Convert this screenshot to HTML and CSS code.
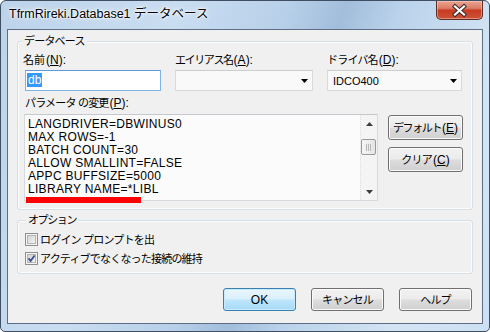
FILE: index.html
```html
<!DOCTYPE html>
<html lang="ja">
<head>
<meta charset="utf-8">
<title>TfrmRireki.Database1 データベース</title>
<link rel="stylesheet" href="styles.css">
</head>
<body>
<div class="window">
  <div class="titlebar">
    <span class="title">TfrmRireki.Database1 データベース</span>
    <div class="close">
      <svg width="45" height="17" viewBox="0 0 45 17">
        <path d="M18 4.5 L27 12.5 M27 4.5 L18 12.5" stroke="#3b2a28" stroke-width="4.2" stroke-linecap="square" fill="none"/>
        <path d="M18 4.5 L27 12.5 M27 4.5 L18 12.5" stroke="#ffffff" stroke-width="2.2" stroke-linecap="square" fill="none"/>
      </svg>
    </div>
  </div>
  <div class="client">
    <div class="group g1">
      <span class="legend jp">データベース</span>
      <div class="fields">
        <div class="field">
          <span class="label name-label"><span class="jp loose">名前</span><span class="key">(<u>N</u>):</span></span>
          <div class="edit focused"><span class="sel">db</span></div>
        </div>
        <div class="field">
          <span class="label"><span class="jp tight">エイリアス名</span><span class="key">(<u>A</u>):</span></span>
          <div class="combo">
            <span class="combo-text"></span>
            <svg class="arrow" width="7" height="4" viewBox="0 0 7 4"><polygon points="0,0 7,0 3.5,4" fill="#000"/></svg>
          </div>
        </div>
        <div class="field">
          <span class="label"><span class="jp">ドライバ名</span><span class="key">(<u>D</u>):</span></span>
          <div class="combo">
            <span class="combo-text">IDCO400</span>
            <svg class="arrow" width="7" height="4" viewBox="0 0 7 4"><polygon points="0,0 7,0 3.5,4" fill="#000"/></svg>
          </div>
        </div>
      </div>
      <span class="label plabel"><span class="jp">パラメータ の変更</span><span class="key">(<u>P</u>):</span></span>
      <div class="paramrow">
        <div class="memo">
          <div class="lines">
            <div>LANGDRIVER=DBWINUS0</div>
            <div>MAX ROWS=-1</div>
            <div>BATCH COUNT=30</div>
            <div>ALLOW SMALLINT=FALSE</div>
            <div>APPC BUFFSIZE=5000</div>
            <div>LIBRARY NAME=*LIBL</div>
          </div>
          <div class="vscroll">
            <div class="sbtn"><svg width="7" height="4" viewBox="0 0 7 4"><polygon points="3.5,0 7,4 0,4" fill="#3c3c3c"/></svg></div>
            <div class="track"><div class="thumb"><span></span><span></span><span></span></div></div>
            <div class="sbtn"><svg width="7" height="4" viewBox="0 0 7 4"><polygon points="0,0 7,0 3.5,4" fill="#3c3c3c"/></svg></div>
          </div>
          <div class="redmark"></div>
        </div>
        <div class="sidebtns">
          <div class="btn"><span class="jp tight">デフォルト</span><span class="key">(<u>E</u>)</span></div>
          <div class="btn"><span class="jp">クリア</span><span class="key">(<u>C</u>)</span></div>
        </div>
      </div>
    </div>
    <div class="group g2">
      <span class="legend jp tight">オプション</span>
      <div class="check">
        <svg width="13" height="13" viewBox="0 0 13 13">
          <defs><linearGradient id="cb1" x1="0" y1="0" x2="1" y2="1"><stop offset="0" stop-color="#cfcfcf"/><stop offset="1" stop-color="#f7f7f7"/></linearGradient></defs>
          <rect x="0.5" y="0.5" width="12" height="12" fill="#f4f4f4" stroke="#8e8f8f"/>
          <rect x="2.5" y="2.5" width="8" height="8" fill="url(#cb1)" stroke="#b4b4b4"/>
        </svg>
        <span class="jp">ログイン プロンプトを出</span>
      </div>
      <div class="check">
        <svg width="13" height="13" viewBox="0 0 13 13">
          <defs><linearGradient id="cb2" x1="0" y1="0" x2="1" y2="1"><stop offset="0" stop-color="#cfcfcf"/><stop offset="1" stop-color="#f7f7f7"/></linearGradient></defs>
          <rect x="0.5" y="0.5" width="12" height="12" fill="#f4f4f4" stroke="#8e8f8f"/>
          <rect x="2.5" y="2.5" width="8" height="8" fill="url(#cb2)" stroke="#b4b4b4"/>
          <path d="M3.6 6.4 L5.6 9 L9.6 3.4" stroke="#3a4f8c" stroke-width="1.8" fill="none"/>
        </svg>
        <span class="jp">アクティブでなくなった接続の維持</span>
      </div>
    </div>
    <div class="buttons">
      <div class="btn default">OK</div>
      <div class="btn"><span class="jp">キャンセル</span></div>
      <div class="btn"><span class="jp">ヘルプ</span></div>
    </div>
  </div>
</div>
</body>
</html>
```

FILE: styles.css
```css
* { box-sizing: border-box; }
html, body { margin: 0; padding: 0; }
body {
  width: 490px;
  height: 332px;
  overflow: hidden;
  background: #ffffff;
  font-family: "Liberation Sans", "Noto Sans CJK JP", sans-serif;
  font-size: 12px;
  color: #000;
}
u { text-decoration: underline; text-underline-offset: 1px; }

/* Japanese runs: slightly smaller and tighter, like the proportional kana of MS UI Gothic */
.jp { font-size: 11px; letter-spacing: -0.8px; }
.jp.loose { letter-spacing: 0; }
.jp.tight { letter-spacing: -1.4px; }
.key { font-size: 12px; letter-spacing: 0; margin-left: 1px; }

.window {
  width: 490px;
  height: 332px;
  border: 1px solid #3f4e60;
  border-radius: 6px 6px 5px 5px;
  padding: 0 6px 7px 6px;
  background: linear-gradient(110deg, #bcd3ea 0%, #c9ddf1 30%, #b7cfe8 48%, #a2bedc 57%, #bad2ea 66%, #d3e4f4 84%, #cde0f3 100%);
  display: flex;
  flex-direction: column;
}

.titlebar {
  height: 28px;
  flex: none;
  display: flex;
  align-items: flex-start;
}
.title {
  padding: 6px 0 0 2px;
  line-height: 14px;
  font-size: 12.5px;
  text-shadow: 0 0 6px #fff, 0 0 3px #fff, 0 0 2px #fff;
}
.close {
  margin-left: auto;
  width: 47px;
  height: 19px;
  border: 1px solid #5a2d26;
  border-top: none;
  border-radius: 0 0 5px 5px;
  background: linear-gradient(#e9a593 0%, #dc7d66 40%, #c83b23 52%, #cc5236 100%);
  box-shadow: inset 0 0 0 1px rgba(255,220,210,0.45);
  display: flex;
  align-items: center;
  justify-content: center;
}

.client {
  flex: 1;
  border: 1px solid #5d6f84;
  background: #f0f0f0;
  display: flex;
  flex-direction: column;
  padding: 11px 10px 12px 9px;
}

.group {
  position: relative;
  width: 456px;
  border: 1px solid #d5dfe5;
  border-radius: 3px;
  box-shadow: inset 0 0 0 1px #fbfcfc;
}
.legend {
  position: absolute;
  top: -8px;
  left: 4px;
  padding: 0 2px;
  line-height: 14px;
  background: #f0f0f0;
}
.g2 .legend { left: 8px; }

.g1 {
  height: 169px;
  padding: 11px 9px 8px 7px;
  display: flex;
  flex-direction: column;
}
.label { display: block; line-height: 14px; white-space: nowrap; }
.name-label { margin-left: -2px; }

.fields {
  display: grid;
  grid-template-columns: 136px 138px 135px;
  column-gap: 14px;
}
.field { display: flex; flex-direction: column; gap: 3px; }

.edit {
  height: 21px;
  background: #fff;
  border: 1px solid #7eb4ea;
  border-top-color: #5b9bd9;
  padding: 2px 0 0 1px;
}
.sel {
  display: inline-block;
  background: #3399ff;
  color: #fff;
  line-height: 14px;
  padding: 0 1px;
}
.combo {
  height: 21px;
  background: #f9f9f9;
  border: 1px solid #d9d9d9;
  border-top-color: #cdcdcd;
  display: flex;
  align-items: center;
  padding: 0 4px 0 5px;
}
.combo-text { flex: 1; font-size: 11px; line-height: 14px; }
.arrow { flex: none; }

.plabel { margin-top: 5px; }

.paramrow {
  margin-top: 4px;
  display: flex;
  gap: 10px;
}
.memo {
  position: relative;
  width: 354px;
  height: 87px;
  margin-left: -1px;
  background: #fbfbfb;
  border: 1px solid #d6d9de;
  border-top-color: #c4c8cf;
  display: flex;
}
.lines {
  flex: 1;
  overflow: hidden;
  padding: 3px 0 0 3px;
  font-size: 12px;
  line-height: 13px;
  letter-spacing: 0.3px;
  white-space: nowrap;
}
.vscroll {
  width: 17px;
  flex: none;
  display: flex;
  flex-direction: column;
  background: #f5f4f4;
  border-left: 1px dotted #e6dcdc;
}
.sbtn {
  height: 17px;
  flex: none;
  display: flex;
  align-items: center;
  justify-content: center;
}
.track { flex: 1; padding-top: 7px; }
.thumb {
  width: 15px;
  height: 16px;
  border: 1px solid #9a9a9a;
  border-radius: 2px;
  background: linear-gradient(90deg, #f6f6f6, #e4e4e4);
  display: flex;
  justify-content: center;
  align-items: center;
  gap: 1px;
}
.thumb span { width: 1px; height: 7px; background: #b8b8b8; }
.redmark {
  position: absolute;
  left: 1px;
  top: 82px;
  width: 115px;
  height: 6px;
  background: #ff0000;
}

.sidebtns {
  width: 75px;
  margin-top: 1px;
  display: flex;
  flex-direction: column;
  gap: 7px;
}
.btn {
  height: 25px;
  border: 1px solid #707070;
  border-radius: 3px;
  background: linear-gradient(#f2f2f2 0%, #ebebeb 48%, #dddddd 52%, #cfcfcf 100%);
  box-shadow: inset 0 0 0 1px #fbfbfb;
  display: flex;
  align-items: center;
  justify-content: center;
  line-height: 14px;
  white-space: nowrap;
}

.g2 {
  height: 54px;
  margin-top: 10px;
  padding: 9px 7px 5px 7px;
}
.check {
  height: 19px;
  display: flex;
  align-items: center;
  gap: 2px;
  line-height: 14px;
}
.check svg { flex: none; }

.buttons {
  margin-top: 14px;
  display: flex;
  justify-content: flex-end;
  gap: 15px;
}
.buttons .btn { width: 73px; height: 23px; }
.btn.default {
  border-color: #3c7fb1;
  background: linear-gradient(#eaf6fd 0%, #d9f0fc 48%, #bee6fd 52%, #a7d9f5 100%);
  box-shadow: inset 0 0 0 1px #c6ecfc;
}
```
